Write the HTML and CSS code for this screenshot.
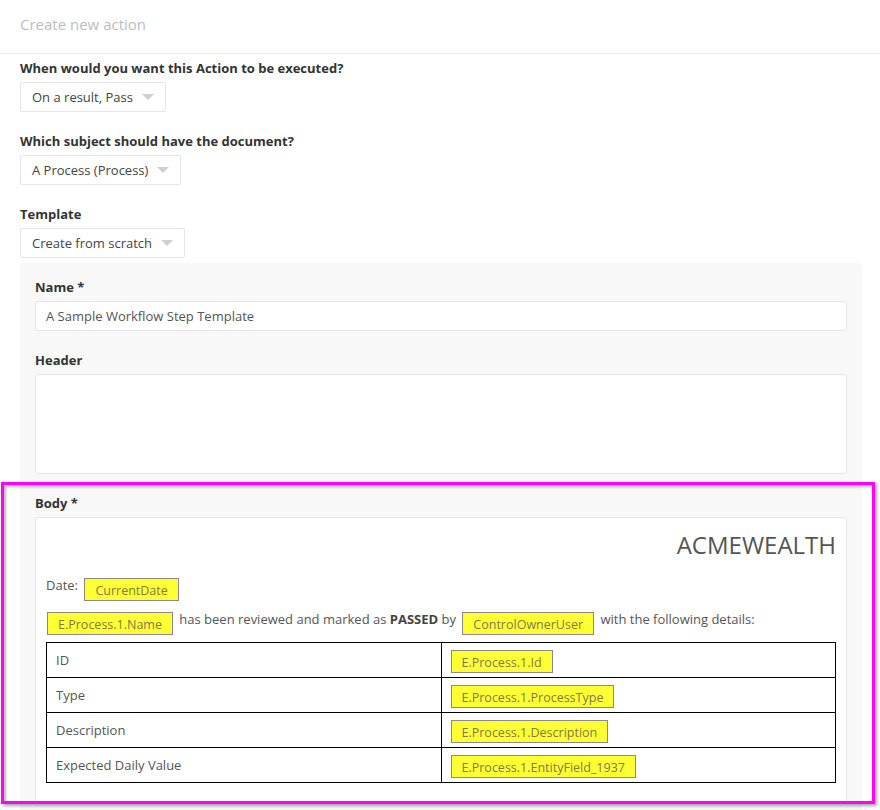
FILE: index.html
```html
<!DOCTYPE html>
<html lang="en">
<head>
    <meta charset="UTF-8">
    <title>Create new action</title>
    <link rel="stylesheet" href="styles.css">
</head>
<body>
    <div class="topbar">
        <h1 class="title">Create new action</h1>
    </div>

    <div class="form">
        <div class="field">
            <label class="label">When would you want this Action to be executed?</label>
            <div class="select">On a result, Pass <span class="caret"></span></div>
        </div>
        <div class="field">
            <label class="label">Which subject should have the document?</label>
            <div class="select">A Process (Process) <span class="caret"></span></div>
        </div>
        <div class="field field-last">
            <label class="label">Template</label>
            <div class="select">Create from scratch <span class="caret"></span></div>
        </div>

        <div class="panel">
            <div class="field">
                <label class="label">Name *</label>
                <div class="input">A Sample Workflow Step Template</div>
            </div>
            <div class="field">
                <label class="label">Header</label>
                <div class="input textarea"></div>
            </div>
            <div class="field">
                <label class="label">Body *</label>
                <div class="editor">
                    <div class="brand">ACMEWEALTH</div>
                    <p class="line">Date: <span class="tag">CurrentDate</span></p>
                    <p class="line"><span class="tag tag-first">E.Process.1.Name</span> has been reviewed and marked as <b>PASSED</b> by <span class="tag">ControlOwnerUser</span> with the following details:</p>
                    <table class="details">
                        <tr><td>ID</td><td><span class="tag">E.Process.1.Id</span></td></tr>
                        <tr><td>Type</td><td><span class="tag">E.Process.1.ProcessType</span></td></tr>
                        <tr><td>Description</td><td><span class="tag">E.Process.1.Description</span></td></tr>
                        <tr><td>Expected Daily Value</td><td><span class="tag">E.Process.1.EntityField_1937</span></td></tr>
                    </table>
                </div>
            </div>
        </div>
    </div>

    <div class="highlight"></div>
</body>
</html>
```

FILE: styles.css
```css
* {
    margin: 0;
    padding: 0;
    box-sizing: border-box;
}
body {
    font-family: "Open Sans", "Noto Sans", sans-serif;
    font-size: 13px;
    color: #333;
    background: #fff;
    height: 810px;
    overflow: hidden;
}
.topbar {
    height: 54px;
    padding: 14px 20px 0;
    border-bottom: 1px solid #ececec;
}
.title {
    font-size: 15px;
    font-weight: 400;
    line-height: 21px;
    color: #bdbdbd;
}
.form {
    padding: 5px 18px 0 20px;
}
.field {
    margin-bottom: 20px;
}
.field-last {
    margin-bottom: 5px;
}
.label {
    display: block;
    font-weight: 700;
    line-height: 18px;
    margin-bottom: 5px;
    color: #333;
}
.select {
    display: inline-flex;
    align-items: center;
    height: 30px;
    padding: 0 11px 0 11px;
    border: 1px solid #e6e6e6;
    border-radius: 2px;
    color: #444;
    background: #fff;
}
.caret {
    width: 0;
    height: 0;
    margin-left: 9px;
    border-left: 6px solid transparent;
    border-right: 6px solid transparent;
    border-top: 6px solid #cfcfcf;
}
.panel {
    background: #f8f8f8;
    border-radius: 3px;
    padding: 15px 15px 0;
    height: 560px;
}
.input {
    height: 30px;
    line-height: 28px;
    padding: 0 10px;
    border: 1px solid #e6e6e6;
    border-radius: 3px;
    background: #fff;
    color: #555;
}
.textarea {
    height: 100px;
}
.editor {
    background: #fff;
    border: 1px solid #e6e6e6;
    border-radius: 3px;
    padding: 12px 10px 20px 10px;
    color: #555;
}
.brand {
    text-align: right;
    font-size: 24px;
    line-height: 30px;
    color: #555;
    margin-bottom: 14px;
}
.line {
    line-height: 23px;
    margin-bottom: 7px;
}
.line b {
    color: #444;
}
.tag {
    display: inline-block;
    background: #ffff33;
    border: 1px solid #8a8a8a;
    color: #7f7a4e;
    font-size: 12.5px;
    line-height: 17px;
    padding: 3px 10px 1px;
    margin: 0 3px 0 3px;
    vertical-align: -5px;
}
.tag-first {
    margin-left: 1px;
}
.details {
    width: 100%;
    border-collapse: collapse;
}
.details td {
    width: 50%;
    height: 35px;
    border: 1px solid #000;
    padding: 0 7px 0 9px;
    color: #555;
}
.details td .tag {
    margin: 2px 0 0;
    vertical-align: middle;
}
.highlight {
    position: absolute;
    left: 1px;
    top: 482px;
    width: 874px;
    height: 322px;
    border: 3px solid #f0f;
    box-shadow: 2px 2px 3px rgba(0, 0, 0, 0.35), inset 2px 2px 3px rgba(0, 0, 0, 0.3);
}
```
